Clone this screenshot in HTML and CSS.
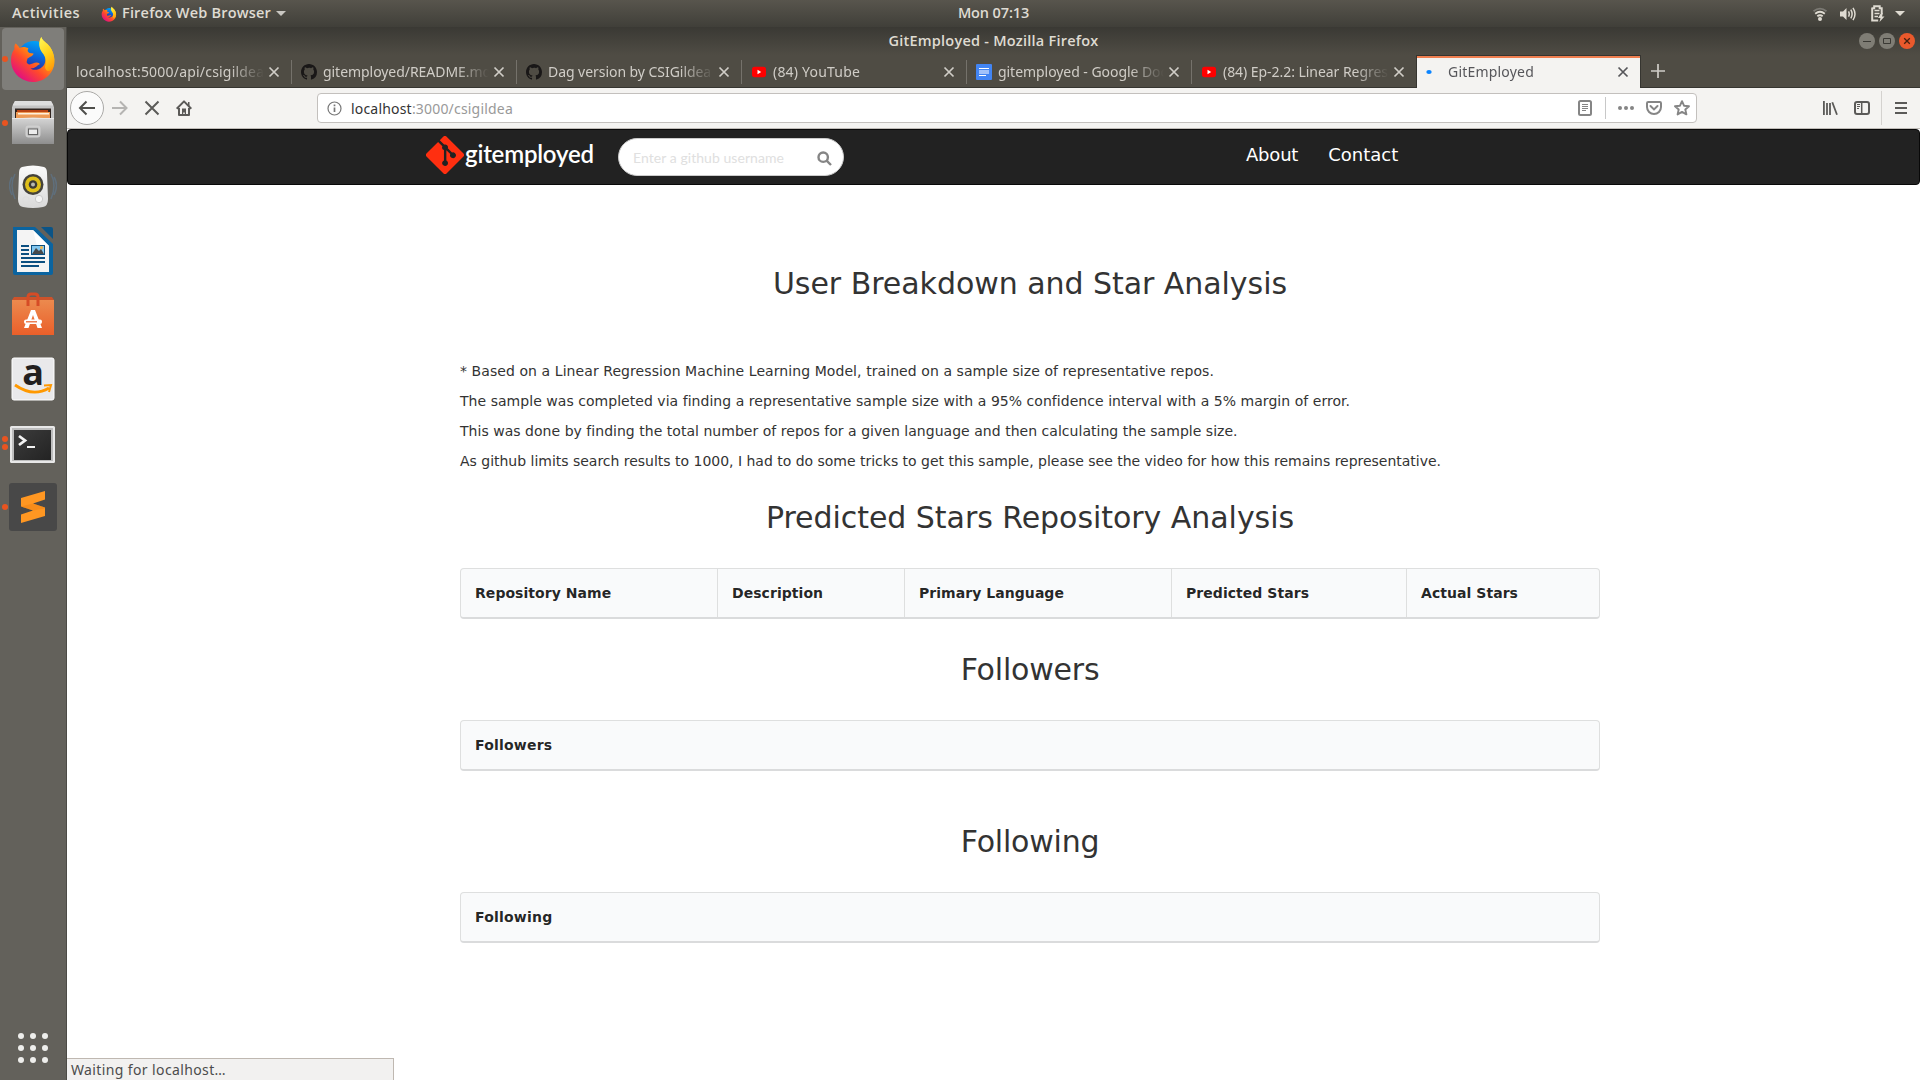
FILE: index.html
```html
<!DOCTYPE html>
<html lang="en">
<head>
<meta charset="utf-8">
<title>GitEmployed</title>
<link rel="stylesheet" href="styles.css">
</head>
<body>
<svg class="defs" width="0" height="0">
  <defs>
    <linearGradient id="ff-body" x1="0.85" y1="0.1" x2="0.2" y2="0.9"><stop offset="0" stop-color="#ffde2b"/><stop offset=".35" stop-color="#ff9a0b"/><stop offset=".65" stop-color="#ff4a2b"/><stop offset="1" stop-color="#e3107e"/></linearGradient>
    <linearGradient id="ff-globe" x1=".7" y1="0" x2=".4" y2="1"><stop offset="0" stop-color="#00a8f8"/><stop offset=".45" stop-color="#0a68dc"/><stop offset="1" stop-color="#3b1485"/></linearGradient>
    <linearGradient id="ff-tail" x1=".3" y1="0" x2=".7" y2="1"><stop offset="0" stop-color="#fff44f"/><stop offset=".5" stop-color="#ffd21c"/><stop offset="1" stop-color="#ff9b08"/></linearGradient>
    <linearGradient id="grey" x1="0" y1="0" x2="0" y2="1"><stop offset="0" stop-color="#d6d6d6"/><stop offset="1" stop-color="#8e8e8e"/></linearGradient>
    <linearGradient id="white" x1="0" y1="0" x2="0" y2="1"><stop offset="0" stop-color="#fbfbfb"/><stop offset="1" stop-color="#d9d9d9"/></linearGradient>
    <linearGradient id="bag" x1="0" y1="0" x2="0" y2="1"><stop offset="0" stop-color="#ec8a4e"/><stop offset="1" stop-color="#ea5f2a"/></linearGradient>
    <linearGradient id="term" x1="0" y1="0" x2="1" y2="1"><stop offset="0" stop-color="#3c3c3c"/><stop offset="1" stop-color="#232323"/></linearGradient>
    <symbol id="firefox" viewBox="0 0 48 48">
      <circle cx="25" cy="23" r="17" fill="url(#ff-globe)"/>
      <path d="M6.500 8.500C8 9.500 9.500 11 10.500 13C14 11.500 17 12 19.500 13.500C18 15 18.500 17 20.500 18L24.500 18.500C24.500 20.500 21 22 18.500 23.500C18 26 17 27 18.500 28.500C21 31 24 27.500 27.500 27.500C30 27.500 31 28.500 30.500 29.500C28 30 27 33.500 21.500 33.500C26 37 36 33.500 36.500 25C37 19 31.500 17 30.500 10C30 6 31.500 3 32.500 2C33 6 38 7.500 41 12C46 19 47.500 30 42 37.500C37 44.500 30.500 47 23.500 47C12 46.500 2 37.500 2 25C2 20 3.500 16.500 5.500 14C5 12 5.500 10 6.500 8.500Z" fill="url(#ff-body)"/>
      <path d="M32.500 2C33 6 38 7.500 41 12C45.500 19 46 25 44.500 31C42 37 37 38 36 32C37.500 27 37 22 33.500 18C30 14 29 7 32.500 2Z" fill="url(#ff-tail)"/>
    </symbol>
    <symbol id="octocat" viewBox="0 0 16 16"><path fill="#191717" fill-rule="evenodd" d="M8 0C3.580 0 0 3.580 0 8c0 3.540 2.290 6.530 5.470 7.590.4.070.55-.17.55-.38 0-.19-.01-.82-.01-1.490-2.010.37-2.530-.49-2.690-.94-.09-.23-.48-.94-.82-1.130-.28-.15-.68-.52-.01-.53.63-.01 1.080.58 1.230.82.72 1.210 1.870.87 2.330.66.07-.52.28-.87.51-1.070-1.780-.2-3.640-.89-3.640-3.950 0-.87.31-1.590.82-2.150-.08-.2-.36-1.020.08-2.120 0 0 .67-.21 2.200.82A7.600 7.600 0 0 1 8 3.870c.68 0 1.360.09 2 .27 1.530-1.040 2.200-.82 2.200-.82.44 1.100.16 1.920.08 2.120.51.56.82 1.270.82 2.150 0 3.070-1.870 3.750-3.650 3.950.29.25.54.73.54 1.480 0 1.070-.01 1.930-.01 2.200 0 .21.15.46.55.38A8.010 8.010 0 0 0 16 8c0-4.420-3.580-8-8-8z"/></symbol>
    <symbol id="youtube" viewBox="0 0 16 16"><rect x="1" y="2.800" width="14" height="10.400" rx="2.600" fill="#f00"/><path d="M6.500 5.800v4.400L10.200 8z" fill="#fff"/></symbol>
    <symbol id="close" viewBox="0 0 12 12"><path d="M1.500 1.500l9 9M10.500 1.500l-9 9" fill="none" stroke="currentColor" stroke-width="1.700"/></symbol>
  </defs>
</svg>

<div class="desktop">
  <header class="topbar">
    <div class="topbar-left">
      <span class="activities">Activities</span>
      <svg class="app-icon" width="16" height="16"><use href="#firefox"/></svg>
      <span class="app-name">Firefox Web Browser</span>
      <svg width="10" height="5" viewBox="0 0 10 5"><path d="M0 0h10L5 5z" fill="#c9c7c2"/></svg>
    </div>
    <span class="clock">Mon 07:13</span>
    <div class="topbar-right">
      <svg width="16" height="16" viewBox="0 0 16 16" fill="none"><path d="M1.500 5.200Q8 .2 14.500 5.200" stroke="#7c7a74" stroke-width="1.800"/><path d="M3.200 7.700Q8 4 12.800 7.700M5.300 10.200Q8 8.200 10.700 10.200" stroke="#dfdbd2" stroke-width="1.900"/><circle cx="8" cy="13" r="2" fill="#dfdbd2"/></svg>
      <svg width="16" height="16" viewBox="0 0 16 16" fill="none" stroke="#dfdbd2" stroke-width="1.500"><path d="M0 5.500h3L6.500 2v12L3 10.500H0z" fill="#dfdbd2" stroke="none"/><path d="M8.500 5.300q1.500 2.700 0 5.400M10.800 3.600q2.600 4.400 0 8.800M13 1.800q4 6.200 0 12.400"/></svg>
      <svg class="battery" width="16" height="17" viewBox="0 0 16 17"><path d="M2.200 3.200h2V1.200h5.500v2h2V8M2.200 2.500v13h6" fill="none" stroke="#dfdbd2" stroke-width="2"/><path d="M4.500 5.500h5M4.500 8.500h5M4.500 11.500h3.500" stroke="#dfdbd2" stroke-width="1.700"/><path d="M11 8l-3 5h2.500l-1 4 5-5.500H12L13 8z" fill="#dfdbd2"/></svg>
      <svg class="sys-caret" width="10" height="5" viewBox="0 0 10 5"><path d="M0 0h10L5 5z" fill="#dfdbd2"/></svg>
    </div>
  </header>

  <aside class="dock">
    <div class="dock-item active"><i class="dots"><b></b></i><svg width="48" height="48"><use href="#firefox"/></svg></div>
    <div class="dock-item"><i class="dots"><b></b></i>
      <svg width="48" height="48" viewBox="0 0 48 48"><path d="M6 2h36l3 6v16H3V8z" fill="#c4c4c4"/><path d="M6 2h36l2.500 4.500h-41z" fill="#dedede"/><path d="M6 9.500h36V20H6z" fill="#30241f"/><path d="M8 11h31v3H8z" fill="#bb4414"/><path d="M7 13h34v6H7z" fill="#ee9b56"/><path d="M9 14h31v1.500H9z" fill="#fff0dc"/><path d="M3 20q21-3 42 0v25H3z" fill="url(#grey)"/><path d="M3 19.500h42" stroke="#e8e8e8"/><rect x="17.500" y="27.500" width="13" height="10" rx="2" fill="none" stroke="#cfcfcf" stroke-width="2"/><rect x="19.500" y="30" width="9" height="5.500" fill="#ececec" stroke="#666"/></svg></div>
    <div class="dock-item">
      <svg width="48" height="48" viewBox="0 0 48 48"><path d="M6 11q-6 11 0 25M42 11q6 11 0 25M3 14q-5 8 0 18M45 14q5 8 0 18" fill="none" stroke="#5d7893" stroke-width="1.500" opacity=".6"/><path d="M13 4q11-3 22 0 3 1 3 6l1 26q0 7-5 8-10 2-20 0-5-1-5-8l1-26q0-5 3-6z" fill="url(#white)"/><circle cx="24" cy="21.500" r="10.500" fill="#44423b"/><circle cx="24" cy="21.500" r="8" fill="#dfbf1a"/><circle cx="24" cy="21.500" r="4.300" fill="#3c3a35"/><circle cx="24" cy="21.500" r="2" fill="#b9b9b0"/><circle cx="30" cy="36" r="3.700" fill="#f4f4f4" stroke="#c9c9c9"/><rect x="14" y="34" width="6" height="6" rx="2" fill="none" stroke="#ddd"/></svg></div>
    <div class="dock-item">
      <svg width="48" height="48" viewBox="0 0 48 48"><path d="M4 0h22l18 17v29q0 2-2 2H6q-2 0-2-2z" fill="#0b64a0"/><path d="M32 0h10q2 0 2 2v10z" fill="#0b5487"/><path d="M8 3h16l16 16v26H8z" fill="#f4f4f4"/><path d="M24 3l16 16H28z" fill="#fff"/><path d="M12 19h8M12 23h8M12 27h8M12 31h24M12 35h24M12 39h18" stroke="#0b4f80" stroke-width="2"/><rect x="22.500" y="18.500" width="13" height="9" fill="#83c7ef" stroke="#0b4f80"/><path d="M23 27l4-6 3 3 2-2 3 5z" fill="#47494a"/><circle cx="32.500" cy="20.500" r="1.500" fill="#f6b443"/></svg></div>
    <div class="dock-item">
      <svg width="48" height="48" viewBox="0 0 48 48"><path d="M3 9h42v35H3z" fill="url(#bag)"/><path d="M3 9h42l-2-3H5z" fill="#cd532b"/><path d="M19 15V6q0-3 3-3h4q3 0 3 3v9" fill="none" stroke="#d64c26" stroke-width="3"/><path d="M24 19h-2l-7 18h4.500L24 24l4.500 13H33l-7-18z" fill="#fff"/><rect x="15" y="28.500" width="18" height="4.500" rx="2" fill="#fff"/><path d="M17 30.800h11" stroke="#e8622d" stroke-width="1.200"/></svg></div>
    <div class="dock-item">
      <svg width="48" height="48" viewBox="0 0 48 48"><rect x="3" y="3" width="42" height="42" rx="2" fill="#e9e9eb" stroke="#fff"/><text x="24" y="30" class="amazon-a" text-anchor="middle">a</text><path d="M6 30q18 12.500 34 3" fill="none" stroke="#f90" stroke-width="2.800"/><path d="M35 30.500l7-.5-2 7" fill="none" stroke="#f90" stroke-width="2"/></svg></div>
    <div class="dock-item"><i class="dots"><b></b><b></b></i>
      <svg width="48" height="48" viewBox="0 0 48 48"><rect x="1" y="7" width="45" height="37" rx="1.500" fill="#e8e8e8"/><rect x="3" y="9" width="41" height="33" fill="#bdbdbd"/><rect x="5" y="11" width="37" height="30" fill="url(#term)"/><path d="M10 17l6 4.500-6 4.500" fill="none" stroke="#f2f2f2" stroke-width="2.800"/><path d="M18 28h8" stroke="#f2f2f2" stroke-width="2"/></svg></div>
    <div class="dock-item"><i class="dots"><b></b></i>
      <svg width="48" height="48" viewBox="0 0 48 48"><rect width="48" height="48" rx="3" fill="#484848"/><path d="M12 15l24-7v8.500l-12 4 12 4V33l-24 7v-8.500l12-4-12-4z" fill="#ff9722"/><path d="M12 23.500l12-3 12 4v1l-12 2z" fill="#e87d0e" opacity=".4"/></svg></div>
    <svg class="app-grid" width="30" height="30" viewBox="0 0 30 30" fill="#eeeeec"><circle cx="3" cy="3" r="3"/><circle cx="15" cy="3" r="3"/><circle cx="27" cy="3" r="3"/><circle cx="3" cy="15" r="3"/><circle cx="15" cy="15" r="3"/><circle cx="27" cy="15" r="3"/><circle cx="3" cy="27" r="3"/><circle cx="15" cy="27" r="3"/><circle cx="27" cy="27" r="3"/></svg>
  </aside>

  <main class="window">
    <div class="titlebar">
      <span class="window-title">GitEmployed - Mozilla Firefox</span>
      <div class="window-buttons">
        <svg width="16" height="16" viewBox="0 0 16 16"><circle cx="8" cy="8" r="8" fill="#7f7d75"/><path d="M4 8.500h8" stroke="#3a3934"/></svg>
        <svg width="16" height="16" viewBox="0 0 16 16"><circle cx="8" cy="8" r="8" fill="#7f7d75"/><path d="M4.500 5.500h7v5h-7z" fill="none" stroke="#3a3934"/></svg>
        <svg width="16" height="16" viewBox="0 0 16 16"><circle cx="8" cy="8" r="8" fill="#ea592c"/><path d="M5.200 5.200l5.600 5.600M10.800 5.200l-5.600 5.600" stroke="#45200f" stroke-width="1.300"/></svg>
      </div>
    </div>
    <div class="tabs">
      <div class="tab"><span class="tab-title wide">localhost:5000/api/csigildea</span><svg width="12" height="12"><use href="#close"/></svg></div>
      <div class="tab"><svg width="16" height="16"><use href="#octocat"/></svg><span class="tab-title">gitemployed/README.md</span><svg width="12" height="12"><use href="#close"/></svg></div>
      <div class="tab"><svg width="16" height="16"><use href="#octocat"/></svg><span class="tab-title">Dag version by CSIGildea</span><svg width="12" height="12"><use href="#close"/></svg></div>
      <div class="tab"><svg width="16" height="16"><use href="#youtube"/></svg><span class="tab-title wide">(84) YouTube</span><svg width="12" height="12"><use href="#close"/></svg></div>
      <div class="tab"><svg width="16" height="16" viewBox="0 0 16 16"><rect width="16" height="16" rx="1" fill="#4285f4"/><path d="M3 4.500h10M3 7h10M3 9h10M3 11.500h7" stroke="#fff" stroke-width="1.200"/></svg><span class="tab-title">gitemployed - Google Docs</span><svg width="12" height="12"><use href="#close"/></svg></div>
      <div class="tab last"><svg width="16" height="16"><use href="#youtube"/></svg><span class="tab-title">(84) Ep-2.2: Linear Regress</span><svg width="12" height="12"><use href="#close"/></svg></div>
      <div class="tab current"><svg width="16" height="16" viewBox="0 0 16 16"><ellipse cx="3" cy="8" rx="2.700" ry="2" fill="#0a84ff"/></svg><span class="tab-title wide">GitEmployed</span><svg width="12" height="12"><use href="#close"/></svg></div>
      <svg class="new-tab" width="14" height="14" viewBox="0 0 14 14"><path d="M7 0v14M0 7h14" stroke="#d0cdc7" stroke-width="1.700"/></svg>
    </div>
    <div class="toolbar">
      <div class="nav-buttons">
        <span class="back"><svg width="18" height="16" viewBox="0 0 18 16"><path d="M17 8H2.500M8.500 1.500L2 8l6.500 6.500" fill="none" stroke="#4f4f4c" stroke-width="2"/></svg></span>
        <svg width="16" height="16" viewBox="0 0 16 16"><path d="M0 8h14M8 1.500L14.500 8 8 14.500" fill="none" stroke="#b5b4b2" stroke-width="2"/></svg>
        <svg width="16" height="16" viewBox="0 0 16 16"><path d="M1.500 1.500l13 13M14.500 1.500l-13 13" stroke="#5b5a58" stroke-width="2"/></svg>
        <svg width="16" height="16" viewBox="0 0 16 16"><path d="M.7 8.700L8 1.400l7.300 7.300M3 8v7h10V8" fill="none" stroke="#5b5a58" stroke-width="2" stroke-linejoin="round"/><path d="M6 8.500h4V15H8.800v-2.500H7.200V15H6z" fill="#5b5a58"/><path d="M12 2h1.500v4H12z" fill="#5b5a58"/></svg>
      </div>
      <div class="urlbar">
        <svg width="15" height="15" viewBox="0 0 15 15"><circle cx="7.500" cy="7.500" r="6.500" fill="none" stroke="#777" stroke-width="1.200"/><path d="M7.500 6.500V11M7.500 3.500v1.700" stroke="#777" stroke-width="1.700"/></svg>
        <span class="url"><span class="host">localhost</span>:3000/csigildea</span>
        <svg class="reader" width="16" height="16" viewBox="0 0 16 16" fill="none" stroke="#858585"><rect x="2" y="1" width="12" height="14" rx="1.500" stroke-width="2"/><path d="M5 4.500h6M5 6.500h6M5 8.500h6M5 10.500h4"/></svg>
        <i class="url-sep"></i>
        <svg width="16" height="16" viewBox="0 0 16 16" fill="#858585"><circle cx="2" cy="8" r="2"/><circle cx="8" cy="8" r="2"/><circle cx="14" cy="8" r="2"/></svg>
        <svg width="16" height="16" viewBox="0 0 16 16" fill="none" stroke="#858585" stroke-width="2"><path d="M2.200 2h11.600Q15 2 15 3.200V7a7 7 0 0 1-14 0V3.200Q1 2 2.200 2z"/><path d="M4.500 6L8 9.400 11.500 6" stroke-linecap="round"/></svg>
        <svg width="16" height="16" viewBox="0 0 16 16" fill="none" stroke="#858585" stroke-width="1.900" stroke-linejoin="round"><path d="M8 1.200l2 4.500 5 .5-3.700 3.300 1.100 4.900L8 11.900l-4.400 2.500 1.100-4.900L1 6.200l5-.5z"/></svg>
      </div>
      <div class="tools">
        <svg width="16" height="16" viewBox="0 0 16 16" stroke="#5b5a58" stroke-width="1.800"><path d="M1.900 1v14M5 3v12M8 3v12M10.300 2.200l4.700 12.600"/></svg>
        <svg width="16" height="16" viewBox="0 0 16 16" fill="none" stroke="#5b5a58"><rect x="1" y="2" width="14" height="12" rx="2" stroke-width="2"/><path d="M7.700 2v12" stroke-width="1.500"/><path d="M3 4.500h3M3 6.500h3M3 8.500h2"/></svg>
        <i class="tool-sep"></i>
        <svg width="16" height="16" viewBox="0 0 16 16" stroke="#5b5a58" stroke-width="2"><path d="M2 3h12M2 8h12M2 13h12"/></svg>
      </div>
    </div>

    <div class="page">
      <nav class="navbar">
        <a class="brand">
          <svg width="38" height="38" viewBox="0 0 92 92"><path fill="#ff2f10" d="M90.156 41.965L50.036 1.848a5.918 5.918 0 0 0-8.372 0l-8.328 8.332 10.566 10.566a7.030 7.030 0 0 1 7.230 1.684 7.034 7.034 0 0 1 1.669 7.277l10.187 10.184a7.028 7.028 0 0 1 7.278 1.672 7.040 7.040 0 1 1-11.492 2.300l-9.500-9.500v24.997a7.042 7.042 0 1 1-5.790-.204V33.930a7.042 7.042 0 0 1-3.823-9.234L29.242 14.272 1.730 41.777a5.918 5.918 0 0 0 0 8.371l40.121 40.118a5.916 5.916 0 0 0 8.369 0l39.936-39.930a5.918 5.918 0 0 0 0-8.371z"/></svg>
          <span class="wordmark">gitemployed</span>
        </a>
        <div class="search"><span class="placeholder">Enter a github username</span><svg width="15" height="15" viewBox="0 0 15 15" fill="none" stroke="#858585" stroke-width="2.400"><circle cx="6.200" cy="6.200" r="4.700"/><path d="M9.600 9.600l4.400 4.400"/></svg></div>
        <div class="links"><a>About</a><a>Contact</a></div>
      </nav>
      <div class="content">
        <h2 class="lead">User Breakdown and Star Analysis</h2>
        <div class="notes">
          <p class="model">* Based on a Linear Regression Machine Learning Model, trained on a sample size of representative repos.</p>
          <p class="sample">The sample was completed via finding a representative sample size with a 95% confidence interval with a 5% margin of error.</p>
          <p class="method">This was done by finding the total number of repos for a given language and then calculating the sample size.</p>
          <p class="limits">As github limits search results to 1000, I had to do some tricks to get this sample, please see the video for how this remains representative.</p>
        </div>
        <h2>Predicted Stars Repository Analysis</h2>
        <div class="table repos"><div>Repository Name</div><div>Description</div><div>Primary Language</div><div>Predicted Stars</div><div>Actual Stars</div></div>
        <h2 class="short">Followers</h2>
        <div class="table people"><div>Followers</div></div>
        <h2 class="short spaced">Following</h2>
        <div class="table people"><div>Following</div></div>
      </div>
      <div class="status">Waiting for localhost…</div>
    </div>
  </main>
</div>
</body>
</html>
```
FILE: styles.css
```css
* { box-sizing: border-box; }
body { margin: 0; overflow: hidden; font-family: "DejaVu Sans", sans-serif; font-size: 14px; line-height: 20px; color: #333; }
svg { display: block; flex: none; }
.defs { position: absolute; }

.desktop { display: grid; grid-template: 27px 1053px / 67px 1853px; width: 1920px; height: 1080px; }

.topbar { grid-column: 1 / 3; display: grid; grid-template-columns: 1fr auto 1fr; align-items: center; background: linear-gradient(#58554d, #403f39); color: #dfdbd2; font: 600 14.5px/22px "Open Sans", sans-serif; white-space: nowrap; }
.topbar-left { display: flex; align-items: center; padding-left: 12px; }
.activities { letter-spacing: .44px; margin-top: -1px; }
.app-icon { margin: 0 5px 0 21px; }
.app-name { margin: -1px 5px 0 0; letter-spacing: .2px; }
.clock { padding-left: 67px; letter-spacing: -.12px; margin-top: -2px; }
.topbar-right { display: flex; align-items: center; justify-content: flex-end; gap: 12px; padding-right: 15px; }
.battery { margin-left: 2px; }
.sys-caret { margin-left: -3px; }

.dock { display: flex; flex-direction: column; background: #63615b; border-right: 1px solid #4c4b46; }
.dock-item { display: flex; align-items: center; justify-content: center; width: 66px; height: 64px; position: relative; }
.dock-item.active::before { content: ""; position: absolute; inset: 1px 2px; border-radius: 4px; background: #7f7e7a; }
.dock-item svg { position: relative; }
.dots { position: absolute; left: 2px; top: 0; height: 64px; display: flex; flex-direction: column; justify-content: center; gap: 2px; z-index: 1; }
.dots b { width: 6px; height: 6px; border-radius: 50%; background: #e95420; }
.app-grid { margin: auto 0 17px 18px; }
.amazon-a { font: 700 36px "Open Sans", sans-serif; fill: #221f1f; }

.window { display: flex; flex-direction: column; min-width: 0; }
.titlebar { height: 28px; display: grid; grid-template-columns: 1fr auto 1fr; align-items: center; background: linear-gradient(#3a3934, #4f4c44); color: #dfdbd2; font: 600 14.5px/20px "Open Sans", sans-serif; letter-spacing: .23px; }
.window-title { grid-column: 2; margin-top: -1px; }
.window-buttons { display: flex; justify-content: flex-end; gap: 4px; padding-right: 5px; }

.tabs { height: 33px; display: flex; background: #4f4c44; font: 14px/20px "Noto Sans", sans-serif; color: #d0cdc7; box-shadow: inset 0 -1px #363530; }
.tab { width: 225px; display: flex; align-items: center; padding: 0 12px 0 9px; position: relative; }
.tab::after { content: ""; position: absolute; right: 0; top: 5px; bottom: 4px; width: 1px; background: #75726b; }
.tab.last { width: 224px; padding-right: 11px; }
.tab.last::after, .tab.current::after { display: none; }
.tab-title { flex: 1; overflow: hidden; margin: 0 4px 0 6px; white-space: nowrap; letter-spacing: -.05px; -webkit-mask-image: linear-gradient(90deg, #000 calc(100% - 34px), transparent); mask-image: linear-gradient(90deg, #000 calc(100% - 34px), transparent); }
.tab-title.wide { letter-spacing: .2px; }
.tab:first-child .tab-title { margin-left: 0; }
.tab.current { padding-left: 10px; background: #f4f3f1; color: #56565a; box-shadow: inset 1px 1px #363530, inset -1px 0 #363530, inset 0 3px #f07f50; }
.new-tab { margin: 9px 0 0 10px; }

.toolbar { height: 41px; display: flex; align-items: center; background: #f4f3f1; border-bottom: 1px solid #bfbbb7; font: 14px/20px "Noto Sans", sans-serif; }
.nav-buttons { display: flex; align-items: center; gap: 16px; width: 250px; padding-left: 3px; }
.back { width: 34px; height: 34px; border: 1px solid #aaa9a7; border-radius: 50%; background: #fbfbfb; display: flex; align-items: center; justify-content: center; margin-right: -8px; }
.urlbar { width: 1380px; height: 30px; display: flex; align-items: center; gap: 12px; padding: 0 6px 0 9px; border: 1px solid #c3c0bd; border-radius: 4px; background: #fff; color: #999; }
.url { margin: 1px 0 0 -3px; letter-spacing: .19px; }
.host { color: #333; }
.reader { margin-left: auto; }
.url-sep { width: 1px; height: 22px; background: #c8c8c8; }
.tools { flex: 1; display: flex; align-items: center; justify-content: flex-end; padding-right: 11px; gap: 16px; }
.tool-sep { width: 1px; height: 34px; background: #d4d2cf; margin: 0 -5px; }

.page { flex: 1; background: #fff; position: relative; }
.navbar { height: 56px; display: flex; background: #222; border: 1px solid #080808; border-radius: 4px; padding-left: 358px; color: #fff; }
.brand { display: flex; width: 192px; padding-top: 7px; }
.brand svg { margin-top: -1px; }
.wordmark { font: 600 24px/34px Lato, sans-serif; letter-spacing: -.2px; margin-left: 1px; }
.search { width: 226px; height: 38px; margin-top: 8px; display: flex; align-items: center; justify-content: space-between; padding: 2px 11px 0 14px; border: 1px solid #ccc; border-radius: 19px; background: #fff; font: 14px/20px Lato, sans-serif; color: #e0e0e0; }
.placeholder { letter-spacing: .06px; }
.links { display: flex; gap: 30px; margin-left: 402px; padding-top: 15px; font-size: 18px; line-height: 20px; }
.links a:first-child { letter-spacing: -.2px; }

.content { width: 1140px; margin-left: 393px; padding-top: 82px; }
h2 { margin: 0; font-size: 30px; font-weight: 400; line-height: 33px; letter-spacing: -.045px; text-align: center; }
h2.lead { margin-bottom: 61px; }
h2.short { letter-spacing: -.2px; }
h2.spaced { margin-top: 54px; }
.notes { padding-bottom: 20px; }
.notes p { margin: 0 0 10px; }
.model { letter-spacing: .075px; }
.sample { letter-spacing: .04px; }
.method { letter-spacing: .03px; }
.limits { letter-spacing: -.015px; }
.table { display: grid; height: 51px; margin: 34px 0; border: 1px solid #dedfdf; border-bottom: 2px solid #dadbdc; border-radius: 4px; background: #f9fafb; font-weight: 700; line-height: 48px; letter-spacing: .05px; color: rgba(0, 0, 0, .87); }
.table.repos { grid-template-columns: 256px 187px 267px 235px 1fr; }
.table.people { letter-spacing: .2px; }
.table div { padding-left: 14px; }
.table div + div { border-left: 1px solid #dedfdf; }

.status { position: absolute; left: 0; bottom: 0; width: 327px; height: 22px; background: #f2f1f0; border: 1px solid #bfb8b1; border-width: 1px 1px 0 0; padding-left: 4px; font: 14px/22px "Noto Sans", sans-serif; letter-spacing: .38px; color: #4c4c4c; }
```
